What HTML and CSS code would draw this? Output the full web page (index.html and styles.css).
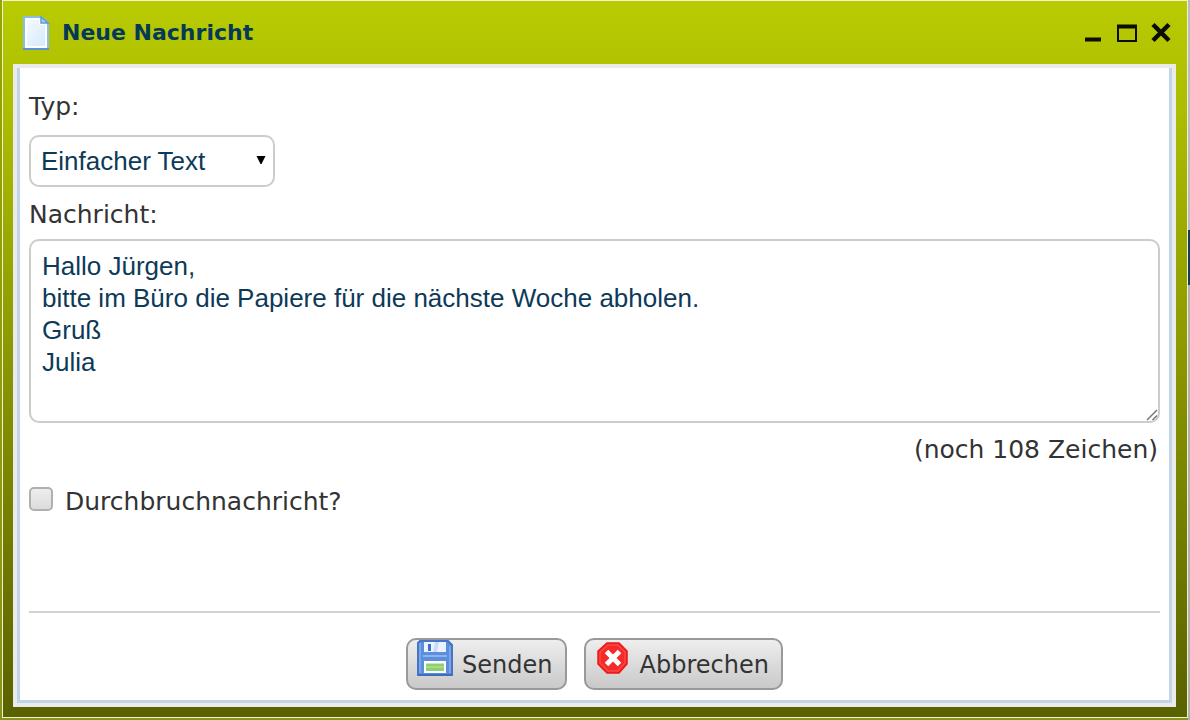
FILE: index.html
```html
<!DOCTYPE html>
<html lang="de">
<head>
<meta charset="utf-8">
<title>Neue Nachricht</title>
<link rel="stylesheet" href="styles.css">
</head>
<body>
<main class="dialog">
  <header class="titlebar">
    <svg class="doc-icon" width="28" height="36" viewBox="0 0 28 36" aria-hidden="true">
      <defs><linearGradient id="paper" x1="0" y1="0" x2="1" y2="1"><stop offset="0" stop-color="#f4faff"/><stop offset="1" stop-color="#d6e9fb"/></linearGradient></defs>
      <path d="M2 2H19L26 8V34H2Z" fill="#fff" stroke="#86bdec" stroke-width="2"/>
      <path d="M5 5H17V10H23V31H5Z" fill="url(#paper)"/>
      <path d="M19 2V8H26Z" fill="#a9d0f3" stroke="#5c9bdc" stroke-width="1.500"/>
      <path d="M1 34H27" stroke="#5b94d0" stroke-width="2"/>
    </svg>
    <h1 class="title">Neue Nachricht</h1>
    <div class="window-controls">
      <button class="window-button" type="button" aria-label="Minimieren"><svg width="20" height="22" viewBox="0 0 20 22"><path d="M2 17.500H18" stroke="#0b0d00" stroke-width="4"/></svg></button>
      <button class="window-button" type="button" aria-label="Maximieren"><svg width="20" height="22" viewBox="0 0 20 22"><path d="M0 4.500H20" stroke="#0b0d00" stroke-width="4"/><path d="M1 4V19H19V4" fill="none" stroke="#0b0d00" stroke-width="2"/></svg></button>
      <button class="window-button" type="button" aria-label="Schließen"><svg width="20" height="22" viewBox="0 0 20 22"><path d="M2 2.500L18 18.500M18 2.500L2 18.500" stroke="#0b0d00" stroke-width="4.500"/></svg></button>
    </div>
  </header>
  <form class="panel">
    <label class="label" for="type">Typ:</label>
    <div class="select-wrap">
      <select class="field type-select" id="type"><option>Einfacher Text</option></select>
      <svg class="select-arrow" width="10" height="10" viewBox="0 0 10 10" aria-hidden="true"><path d="M0.500 1H9.500L5.500 9H4.500Z" fill="#000"/></svg>
    </div>
    <label class="label message-label" for="message">Nachricht:</label>
    <div class="message-wrap">
      <textarea class="field message" id="message">Hallo Jürgen,
bitte im Büro die Papiere für die nächste Woche abholen.
Gruß
Julia</textarea>
      <svg class="grip" width="12" height="12" viewBox="0 0 12 12" aria-hidden="true"><path d="M1 11L11 1M6.500 11L11 6.500" stroke="#777" stroke-width="1.500"/></svg>
    </div>
    <p class="counter">(noch 108 Zeichen)</p>
    <label class="check-row"><input class="checkbox" type="checkbox"><span>Durchbruchnachricht?</span></label>
    <footer class="actions">
      <button class="button" type="button">
        <svg class="button-icon" width="36" height="36" viewBox="0 0 36 36" aria-hidden="true">
          <path d="M3 1H31L35 5V35H1V3Z" fill="#5c8edb" stroke="#4674c6" stroke-width="2"/>
          <path d="M3 3V33M33 6V33" stroke="#86afea" stroke-width="1.500"/>
          <path d="M7 2H29V12H7Z" fill="#eaf3ff"/>
          <path d="M11 4H14V11H11Z" fill="#3e6ec5"/>
          <path d="M18 2H22L20 12H16Z" fill="#c8dcf7"/>
          <path d="M6 16H30" stroke="#8eb4ee" stroke-width="2"/>
          <path d="M7 21H29V33H7Z" fill="#fff"/>
          <path d="M9 23.500H27V31H9Z" fill="#8fcf72"/>
          <path d="M9 27H27" stroke="#a5dd8d" stroke-width="2"/>
          <path d="M1 35H35" stroke="#3f6dbd" stroke-width="2"/>
        </svg>
        <span>Senden</span>
      </button>
      <button class="button" type="button">
        <svg class="button-icon" width="36" height="36" viewBox="0 0 36 36" aria-hidden="true">
          <path d="M12 3H24L32 11V24L24 33H12L3 24V11Z" fill="#e9221f" stroke="#f01818" stroke-width="1.500"/>
          <path d="M13 5H23L30 12V23L23 31H13L5 23V12Z" fill="#f52a2a" stroke="#fb4a44" stroke-width="1.500"/>
          <path d="M11.500 11.500L24.500 24.500M24.500 11.500L11.500 24.500" stroke="#fff" stroke-width="5"/>
        </svg>
        <span>Abbrechen</span>
      </button>
    </footer>
  </form>
</main>
</body>
</html>
```
FILE: styles.css
```css
* { box-sizing: border-box; }
body {
  margin: 0;
  min-height: 100vh;
  display: flex;
  padding: 0 2px 2px;
  font: 25px/32px "DejaVu Sans", Verdana, sans-serif;
  color: #333;
  background:
    linear-gradient(#b9bbc0 230px, #143a5c 230px, #143a5c 285px, #b0b0b0 285px) right / 2px 100% no-repeat,
    linear-gradient(#93a600, #87941c);
}
.dialog {
  flex: 1;
  display: flex;
  flex-direction: column;
  border: 1px solid #f0f3cf;
  padding: 0 10px 9px;
  background: linear-gradient(#b9cb02, #adbe02 100px, #5a6100);
}
.titlebar {
  display: flex;
  align-items: center;
  height: 63px;
  padding: 0 6px 0 9px;
}
.title {
  flex: 1;
  margin: 0 0 0 12px;
  font-size: 22px;
  line-height: 32px;
  color: #043a57;
}
.window-controls { display: flex; gap: 14px; }
.window-button {
  display: flex;
  padding: 0;
  border: 0;
  background: none;
}
.panel {
  flex: 1;
  display: flex;
  flex-direction: column;
  padding: 23px 9px 10px;
  border: 3px solid #c2d5e7;
  border-top-width: 0;
  outline: 4px solid #ebebeb;
  margin: 4px 5px 5px 4px;
  background: #fff;
}
.label { line-height: 32px; }
.message-label { margin-top: 12px; }
.field {
  display: block;
  width: 100%;
  border: 2px solid #ccc;
  border-radius: 10px;
  background: #fff;
  color: #0d3a58;
  font: 26px/32px "Liberation Sans", Arial, sans-serif;
}
.select-wrap { position: relative; width: 246px; margin-top: 12px; }
.type-select { appearance: none; height: 52px; padding: 0 10px; }
.select-arrow { position: absolute; right: 9px; top: 20px; pointer-events: none; }
.message-wrap { position: relative; margin-top: 8px; }
.message { height: 184px; padding: 9px 11px; resize: none; overflow: hidden; }
.grip { position: absolute; right: 2px; bottom: 2px; fill: none; }
.counter { margin: 11px 2px 0; text-align: right; }
.check-row { display: flex; align-items: flex-start; gap: 12px; margin-top: 20px; }
.checkbox {
  appearance: none;
  width: 24px;
  height: 24px;
  margin: 1px 0 0;
  border: 2px solid #b0b0b0;
  border-radius: 5px;
  background: linear-gradient(#eee, #dcdcdc);
}
.actions {
  display: flex;
  justify-content: center;
  gap: 17px;
  margin-top: auto;
  padding-top: 25px;
  border-top: 2px solid #d2d2d2;
}
.button {
  display: flex;
  height: 52px;
  padding: 0 12px 0 9px;
  gap: 9px;
  border: 2px solid #999;
  border-radius: 10px;
  background: linear-gradient(#eee, #c9c9c9);
  color: #333;
  font: inherit;
  font-size: 24px;
}
.button span { padding-top: 9px; }
```
